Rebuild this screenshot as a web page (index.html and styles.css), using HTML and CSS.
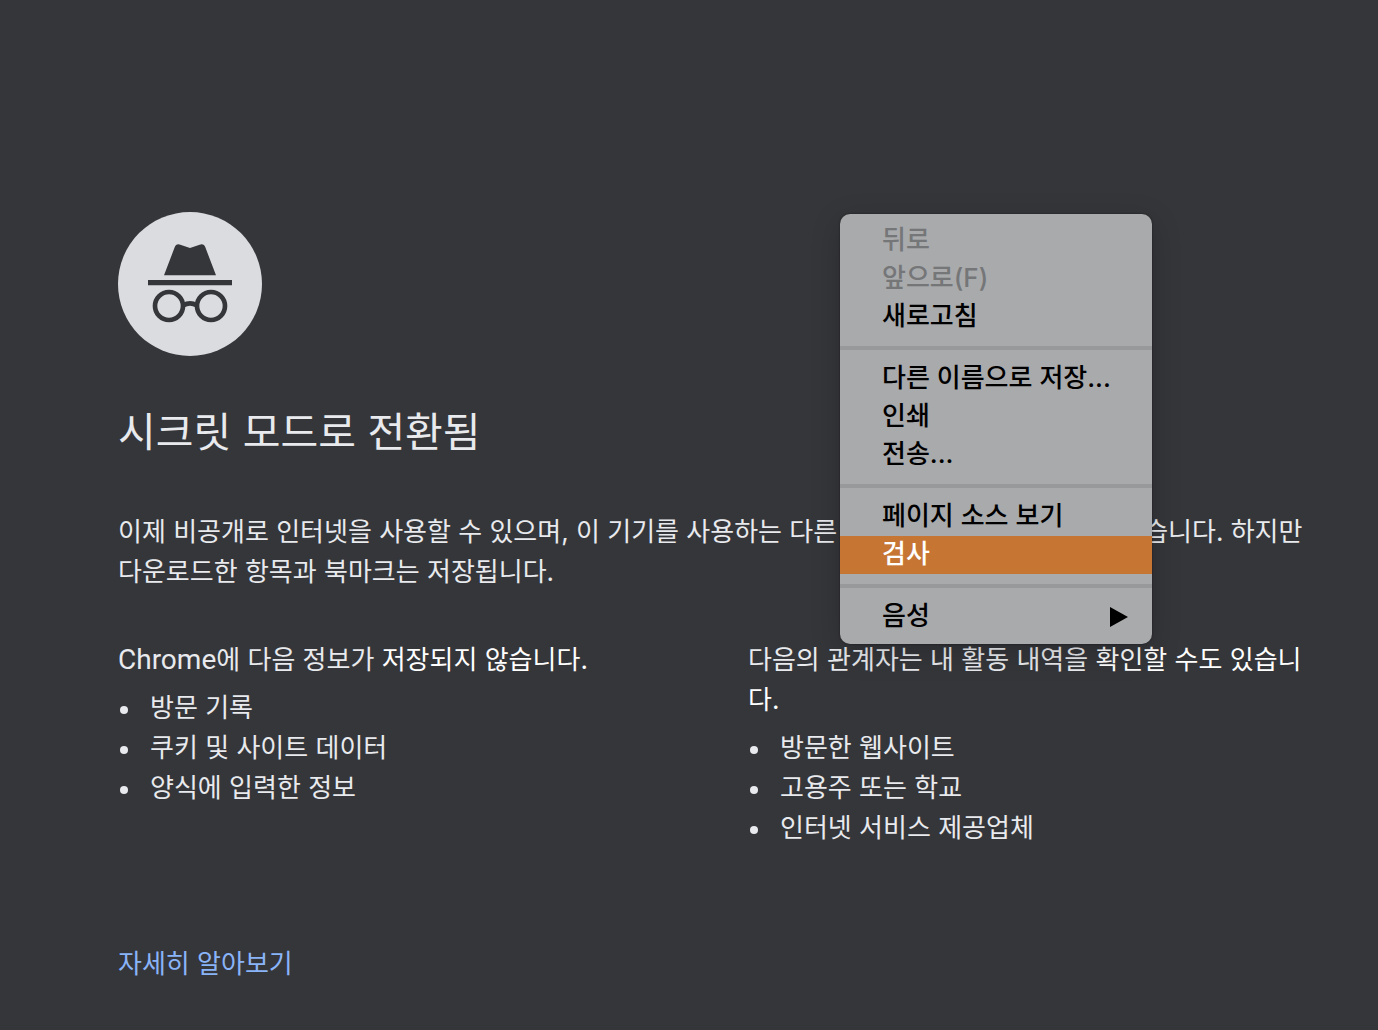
FILE: index.html
```html
<!DOCTYPE html>
<html lang="ko">
<head>
  <meta charset="utf-8">
  <meta name="viewport" content="width=device-width, initial-scale=1">
  <title>새 시크릿 탭</title>
  <link rel="stylesheet" href="styles.css">
</head>
<body>
  <main class="page">
    <svg class="incognito" viewBox="0 0 432 432" aria-hidden="true">
      <circle cx="216" cy="216" r="216" fill="#dadce0"/>
      <g fill="#35363a">
        <path d="M138 190 L170 106 Q174 94 187 98 L216 108 L245 98 Q258 94 262 106 L294 190 Z"/>
        <path d="M90 204 H342 V220 H90 Z"/>
      </g>
      <g fill="none" stroke="#35363a" stroke-width="14">
        <circle cx="153" cy="282" r="42"/>
        <circle cx="279" cy="282" r="42"/>
        <path d="M196 280 Q216 268 236 280"/>
      </g>
    </svg>
    <h1 class="title">시크릿 모드로 전환됨</h1>
    <p class="intro">이제 비공개로 인터넷을 사용할 수 있으며, 이 기기를 사용하는 다른 사용자가 내 활동을 볼 수 없습니다. 하지만 다운로드한 항목과 북마크는 저장됩니다.</p>
    <div class="columns">
      <section>
        <p class="lead"><span class="brand">Chrome</span>에 다음 정보가 <em class="accent">저장되지 않습니다.</em></p>
        <ul class="list">
          <li>방문 기록</li>
          <li>쿠키 및 사이트 데이터</li>
          <li>양식에 입력한 정보</li>
        </ul>
      </section>
      <section>
        <p class="lead">다음의 관계자는 내 활동 내역을 <em class="accent">확인할 수도 있습니다.</em></p>
        <ul class="list">
          <li>방문한 웹사이트</li>
          <li>고용주 또는 학교</li>
          <li>인터넷 서비스 제공업체</li>
        </ul>
      </section>
    </div>
    <a class="more" href="#">자세히 알아보기</a>
  </main>

  <div class="menu" role="menu">
    <button class="item" role="menuitem" disabled>뒤로</button>
    <button class="item" role="menuitem" disabled>앞으로(F)</button>
    <button class="item" role="menuitem">새로고침</button>
    <hr class="separator">
    <button class="item" role="menuitem">다른 이름으로 저장...</button>
    <button class="item" role="menuitem">인쇄</button>
    <button class="item" role="menuitem">전송...</button>
    <hr class="separator">
    <button class="item" role="menuitem">페이지 소스 보기</button>
    <button class="item selected" role="menuitem">검사</button>
    <hr class="separator">
    <button class="item" role="menuitem" aria-haspopup="true">음성
      <svg class="arrow" viewBox="0 0 18 20" aria-hidden="true"><path d="M0 0 L18 10 L0 20 Z" fill="#000"/></svg>
    </button>
  </div>
</body>
</html>
```
FILE: styles.css
```css
* {
  box-sizing: border-box;
}

body {
  margin: 0;
  min-height: 100vh;
  background: #35363a;
  color: #e8eaed;
  font-family: Inter, "Noto Sans CJK KR", sans-serif;
  font-size: 26px;
  line-height: 40px;
}

.page {
  padding: 212px 60px 40px 118px;
}

.incognito {
  display: block;
  width: 144px;
  height: 144px;
}

.title {
  margin: 46px 0 50px;
  font-size: 41px;
  font-weight: 400;
  line-height: 60px;
}

.intro {
  margin: 0 0 48px;
}

.columns {
  display: grid;
  grid-template-columns: 1fr 1fr;
  gap: 60px;
  margin-bottom: 96px;
}

.lead {
  margin: 0 0 8px;
}

.brand {
  font-family: Roboto, sans-serif;
  font-size: 28px;
  line-height: 1;
}

.accent {
  color: #fff;
  font-style: normal;
}

.list {
  margin: 0;
  padding: 0;
  list-style: none;
}

.list li {
  display: flex;
  align-items: center;
  gap: 22px;
}

.list li::before {
  content: "";
  width: 8px;
  height: 8px;
  margin: 4px 0 0 2px;
  border-radius: 50%;
  background: currentColor;
}

.more {
  color: #8ab4f8;
  text-decoration: none;
}

.menu {
  position: absolute;
  top: 214px;
  left: 840px;
  width: 312px;
  padding: 8px 0;
  border-radius: 10px;
  background: #a9aaac;
  box-shadow: 0 0 2px rgba(0, 0, 0, 0.5), 0 8px 30px rgba(0, 0, 0, 0.2);
}

.item {
  display: flex;
  align-items: center;
  justify-content: space-between;
  width: 100%;
  height: 38px;
  padding: 0 24px 2px 42px;
  border: 0;
  background: none;
  color: #000;
  font: inherit;
  font-weight: 500;
  text-align: left;
}

.item:disabled {
  color: #757678;
}

.item.selected {
  background: #c67533;
  color: #fff;
}

.separator {
  height: 4px;
  margin: 10px 0;
  border: 0;
  background: #98999b;
}

.arrow {
  width: 18px;
  height: 20px;
  margin-top: 2px;
}
```
